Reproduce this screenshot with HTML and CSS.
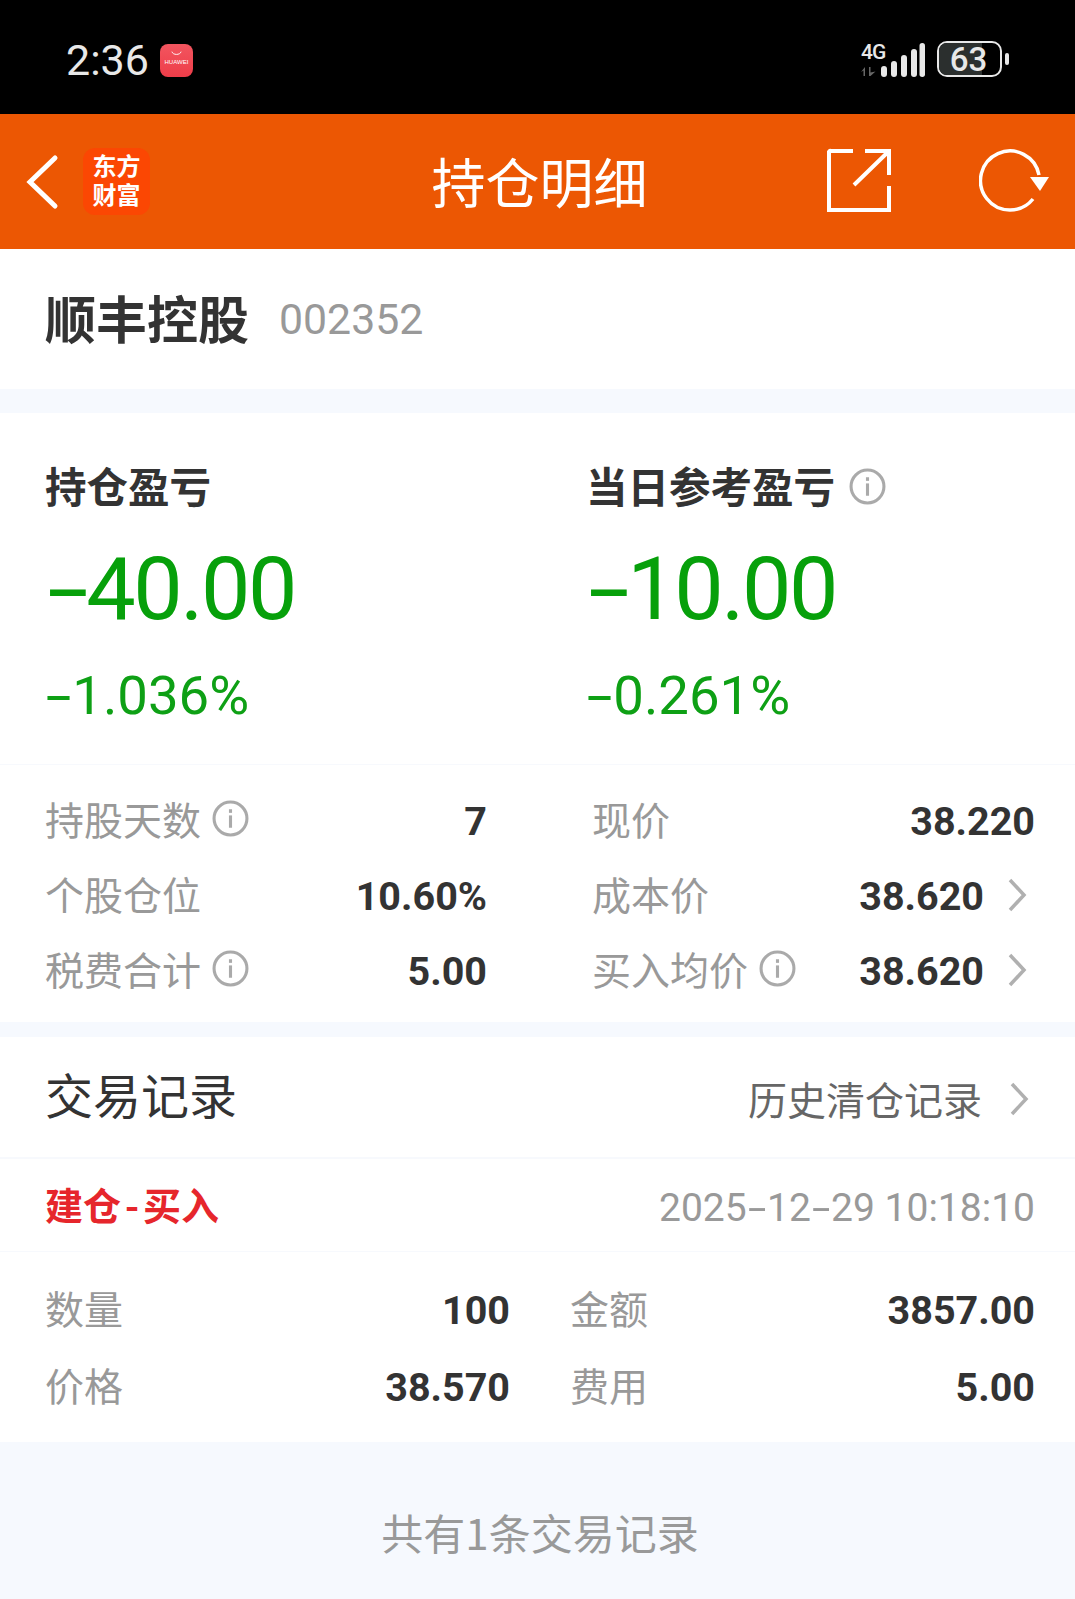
FILE: index.html
```html
<!DOCTYPE html>
<html lang="zh-CN">
<head>
<meta charset="utf-8">
<title>持仓明细</title>
<link rel="stylesheet" href="styles.css">
</head>
<body>
<div class="page">
  <div class="statusbar">
    <div class="status-left">
      <span class="clock">2:36</span>
      <span class="hw-badge">
        <svg class="hw-smile" viewBox="0 0 12 5"><path d="M1 .5C2 4.5 10 4.5 11 .5" fill="none" stroke="#fff" stroke-width="1"/></svg>
        <span class="hw-text">HUAWEI</span>
      </span>
    </div>
    <div class="status-right">
      <span class="net">
        <span class="net-4g">4G</span>
        <svg class="net-arrows" viewBox="0 0 15 9"><path d="M4 0v9H2.500V3.500L0 5zM8 9V0h1.500v5.500L14.500 4.500 9.500 9z" fill="#666"/></svg>
      </span>
      <svg class="signal" viewBox="0 0 44 34"><g fill="#e8e8e8"><rect x="0" y="23" width="6" height="11" rx="3"/><rect x="10" y="18" width="6" height="16" rx="3"/><rect x="20" y="12" width="6" height="22" rx="3"/><rect x="30" y="6" width="6" height="28" rx="3"/><rect x="38.500" y="0" width="5.500" height="34" rx="2.700"/></g></svg>
      <span class="battery"><span class="battery-fill"></span><span class="battery-num">63</span></span>
      <span class="battery-cap"></span>
    </div>
  </div>

  <header class="topbar">
    <div class="top-left">
      <svg class="back" viewBox="0 0 34 56"><path d="M30 4L5 28l25 24" fill="none" stroke="#fff" stroke-width="5" stroke-linecap="round" stroke-linejoin="miter"/></svg>
      <span class="brand">东方<br>财富</span>
    </div>
    <h1 class="title">持仓明细</h1>
    <div class="top-right">
      <svg class="share" viewBox="0 0 64 64"><path d="M26 3H4a1.500 1.500 0 0 0-2 2v57h60V38M38 3h24v24M62 3L27 37" fill="none" stroke="#fff" stroke-width="4"/></svg>
      <svg class="refresh" viewBox="0 0 72 64"><path d="M54 51A29.500 29.500 0 1 1 60 27" fill="none" stroke="#fff" stroke-width="3.500"/><path d="M51 29h19l-9 14z" fill="#fff"/></svg>
    </div>
  </header>

  <section class="stock">
    <span class="stock-name">顺丰控股</span>
    <span class="stock-code">002352</span>
  </section>

  <section class="pnl">
    <div class="pnl-cols">
      <div class="pnl-col">
        <div class="pnl-label">持仓盈亏</div>
        <div class="pnl-value"><span class="dash">-</span>40.00</div>
        <div class="pnl-pct"><span class="dash">-</span>1.036%</div>
      </div>
      <div class="pnl-col">
        <div class="pnl-label">当日参考盈亏<svg class="info info-big" viewBox="0 0 36 36"><use href="#i-info"/></svg></div>
        <div class="pnl-value"><span class="dash">-</span>10.00</div>
        <div class="pnl-pct"><span class="dash">-</span>0.261%</div>
      </div>
    </div>
    <div class="stats">
      <div class="stat-col stat-col-l">
        <div class="stat"><span class="stat-k">持股天数<svg class="info" viewBox="0 0 36 36"><use href="#i-info"/></svg></span><span class="stat-v">7</span></div>
        <div class="stat"><span class="stat-k">个股仓位</span><span class="stat-v">10.60%</span></div>
        <div class="stat"><span class="stat-k">税费合计<svg class="info" viewBox="0 0 36 36"><use href="#i-info"/></svg></span><span class="stat-v">5.00</span></div>
      </div>
      <div class="stat-col stat-col-r">
        <div class="stat"><span class="stat-k">现价</span><span class="stat-v">38.220</span></div>
        <div class="stat"><span class="stat-k">成本价</span><span class="stat-v">38.620<svg class="chev" viewBox="0 0 20 34"><use href="#i-chev"/></svg></span></div>
        <div class="stat"><span class="stat-k">买入均价<svg class="info" viewBox="0 0 36 36"><use href="#i-info"/></svg></span><span class="stat-v">38.620<svg class="chev" viewBox="0 0 20 34"><use href="#i-chev"/></svg></span></div>
      </div>
    </div>
  </section>

  <section class="records">
    <div class="rec-head">
      <span class="rec-title">交易记录</span>
      <span class="rec-link">历史清仓记录<svg class="chev" viewBox="0 0 20 34"><use href="#i-chev"/></svg></span>
    </div>
    <div class="rec-meta">
      <span class="rec-type">建仓<span class="rec-dash">-</span>买入</span>
      <span class="rec-time">2025<span class="dash">-</span>12<span class="dash">-</span>29 10:18:10</span>
    </div>
    <div class="rec-grid">
      <div class="rec-cell"><span class="stat-k">数量</span><span class="stat-v">100</span></div>
      <div class="rec-cell"><span class="stat-k">金额</span><span class="stat-v">3857.00</span></div>
      <div class="rec-cell"><span class="stat-k">价格</span><span class="stat-v">38.570</span></div>
      <div class="rec-cell"><span class="stat-k">费用</span><span class="stat-v">5.00</span></div>
    </div>
  </section>

  <footer class="foot">共有1条交易记录</footer>
</div>

<svg class="defs" width="0" height="0">
  <defs>
    <g id="i-info">
      <circle cx="18" cy="18" r="16" fill="none" stroke="currentColor" stroke-width="3"/>
      <rect x="16.500" y="15" width="3" height="12" fill="currentColor"/>
      <rect x="16.500" y="9" width="3" height="3.500" fill="currentColor"/>
    </g>
    <path id="i-chev" d="M3 2l14 15L3 32" fill="none" stroke="currentColor" stroke-width="3.500"/>
  </defs>
</svg>
</body>
</html>
```
FILE: styles.css
```css
* { box-sizing: border-box; }
html, body { margin: 0; padding: 0; background: #f6f9fe; }
body { font-family: Roboto, "Noto Sans CJK SC", sans-serif; }
.page { width: 1075px; height: 1599px; overflow: hidden; display: flex; flex-direction: column; }
.defs { position: absolute; }
.dash { display: inline-block; width: .5em; text-align: center; transform: scaleX(1.7); }

/* status bar */
.statusbar { height: 114px; background: #000; display: flex; justify-content: space-between; align-items: center; padding: 0 66px; flex: none; color: #e8e8e8; }
.status-left { display: flex; align-items: center; gap: 11px; margin-top: 7px; }
.clock { font-size: 43px; line-height: 1; }
.hw-badge { width: 33px; height: 33px; border-radius: 8px; background: linear-gradient(#f2555f, #ee3d49); display: flex; flex-direction: column; align-items: center; gap: 3px; padding-top: 7px; }
.hw-smile { width: 11px; height: 5px; display: block; }
.hw-text { font-size: 6px; line-height: 7px; color: #fff; font-family: "Liberation Sans", sans-serif; }
.status-right { display: flex; align-items: flex-end; margin-top: 4px; }
.net { display: flex; flex-direction: column; align-items: flex-start; width: 20px; white-space: nowrap; margin-bottom: 1px; }
.net-4g { font-size: 21px; line-height: 20px; font-weight: 500; letter-spacing: -1px; }
.net-arrows { width: 15px; height: 9px; margin-top: 5px; display: block; }
.signal { width: 44px; height: 34px; display: block; margin-right: 12px; }
.battery { position: relative; width: 65px; height: 36px; border: 2px solid #e8e8e8; border-radius: 10px; overflow: hidden; display: flex; align-items: center; justify-content: center; padding-right: 2px; }
.battery-fill { position: absolute; left: 0; top: 0; bottom: 0; width: 70%; background: #2b2f2e; }
.battery-num { position: relative; font-size: 33px; line-height: 1; font-weight: 500; }
.battery-cap { width: 4px; height: 12px; background: #e8e8e8; border-radius: 2px; margin-left: 3px; margin-bottom: 12px; }

/* header */
.topbar { height: 135px; background: #ec5703; display: flex; align-items: center; justify-content: space-between; position: relative; padding: 0 24px 0 25px; flex: none; }
.top-left { display: flex; align-items: center; gap: 24px; }
.back { width: 34px; height: 56px; display: block; }
.brand { width: 67px; height: 67px; border-radius: 12px; background: #fb4703; color: #fff; font-family: "Noto Sans CJK SC", sans-serif; font-weight: 700; font-size: 24px; line-height: 29px; text-align: center; padding-top: 2px; }
.title { position: absolute; left: 4px; right: 0; margin: 0; text-align: center; color: #fff; font-family: "Noto Sans CJK SC", sans-serif; font-size: 54px; font-weight: 400; line-height: 1.2; top: 35px; }
.top-right { display: flex; align-items: center; gap: 88px; margin-top: -4px; }
.share { width: 64px; height: 64px; display: block; }
.refresh { width: 72px; height: 64px; display: block; }

/* stock */
.stock { height: 140px; background: #fff; display: flex; align-items: center; padding: 0 45px; flex: none; gap: 30px; }
.stock-name { font-family: "Noto Sans CJK SC", sans-serif; font-size: 51px; font-weight: 700; color: #333; margin-top: -4px; }
.stock-code { font-size: 42.800px; color: #999; }

/* pnl */
.pnl { margin-top: 24px; background: #fff; flex: none; height: 609px; padding-top: 43px; }
.pnl-cols { display: flex; padding: 0 45px; height: 309px; border-bottom: 1px solid #f7f9fd; }
.pnl-col { width: 541px; flex: none; }
.pnl-label { font-family: "Noto Sans CJK SC", sans-serif; font-size: 41.500px; line-height: 58px; font-weight: 700; color: #333; display: flex; align-items: center; }
.pnl-value { font-size: 88px; line-height: 104px; color: #07a00b; margin-top: 23px; letter-spacing: -2.500px; }
.pnl-value .dash { width: .47em; }
.pnl-pct { font-size: 54.500px; line-height: 64px; color: #0ea015; margin-top: 22px; }
.stats { display: flex; padding: 15px 41px 0 45px; }
.stat-col { display: flex; flex-direction: column; }
.stat-col-l { width: 442px; flex: none; }
.stat-col-r { width: 443px; flex: none; margin-left: 105px; }
.stat { height: 75px; display: flex; justify-content: space-between; align-items: center; }
.stat-k { font-family: "Noto Sans CJK SC", sans-serif; font-size: 39px; color: #999; display: flex; align-items: center; }
.stat-v { font-size: 39.500px; font-weight: 700; color: #333; display: flex; align-items: center; padding-top: 8px; }
.info { width: 37px; height: 37px; margin: 2px 0 0 11px; color: #aaa; display: block; }
.info-big { margin-left: 14px; }
.chev { width: 20px; height: 34px; margin: -4px 8px 0 23px; color: #b0b0b0; display: block; }

/* records */
.records { margin-top: 15px; background: #fff; flex: none; height: 405px; }
.rec-head { height: 122px; display: flex; align-items: center; justify-content: space-between; padding: 0 38px 8px 45px; border-bottom: 2px solid #f7f9fd; }
.rec-title { font-family: "Noto Sans CJK SC", sans-serif; font-size: 48px; color: #333; }
.rec-link { font-family: "Noto Sans CJK SC", sans-serif; font-size: 39px; color: #666; display: flex; align-items: center; margin-top: 10px; }
.rec-link .chev { margin: 2px 8px 0 27px; }
.rec-meta { height: 93px; display: flex; align-items: center; justify-content: space-between; padding: 0 40px 0 45px; border-bottom: 1px solid #f7f9fd; }
.rec-type { font-family: "Noto Sans CJK SC", sans-serif; font-size: 38px; font-weight: 700; color: #e6262c; margin-top: -4px; }
.rec-dash { display: inline-block; width: .58em; text-align: center; }
.rec-time { font-size: 39px; color: #999; margin-top: 6px; }
.rec-time .dash { width: .52em; }
.rec-grid { display: grid; grid-template-columns: 465px 465px; column-gap: 60px; padding: 19px 40px 0 45px; grid-auto-rows: 77px; }
.rec-cell { display: flex; justify-content: space-between; align-items: center; }
.rec-cell .stat-k { padding-bottom: 6px; }
.rec-cell .stat-v { padding-top: 2px; }

/* footer */
.foot { flex: 1; font-family: "Noto Sans CJK SC", sans-serif; text-align: center; font-size: 42px; color: #999; padding: 58px 0 0 5px; line-height: 64px; }
```
